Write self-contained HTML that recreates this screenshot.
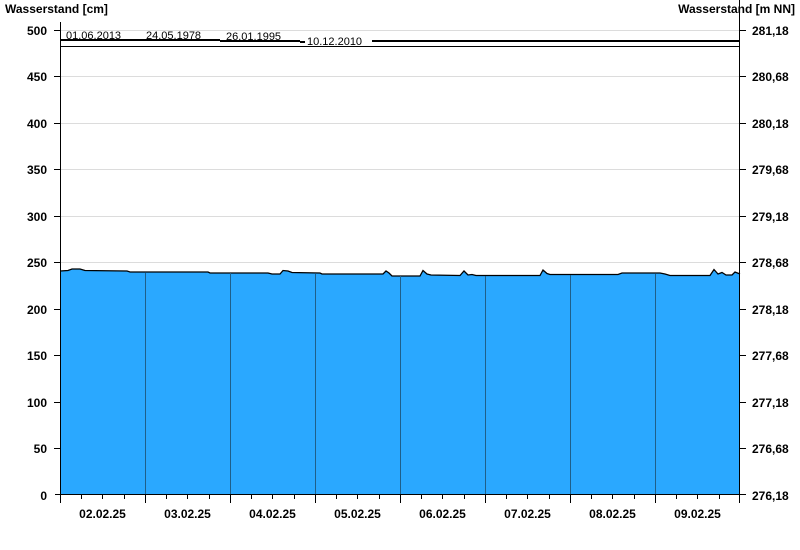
<!DOCTYPE html>
<html><head><style>
body{margin:0;background:#fff;}
svg{display:block;font-family:"Liberation Sans",Arial,sans-serif;}
.b{font-weight:bold;font-size:12px;fill:#000;}
.s{font-size:11px;fill:#000;}
</style></head><body>
<svg width="800" height="550" xmlns="http://www.w3.org/2000/svg">
<rect width="800" height="550" fill="#fff"/>
<g stroke="#dcdcdc" stroke-width="1">
<line x1="60" x2="740" y1="30.5" y2="30.5"/>
<line x1="60" x2="740" y1="76.5" y2="76.5"/>
<line x1="60" x2="740" y1="123.5" y2="123.5"/>
<line x1="60" x2="740" y1="169.5" y2="169.5"/>
<line x1="60" x2="740" y1="216.5" y2="216.5"/>
<line x1="60" x2="740" y1="262.5" y2="262.5"/>
</g>
<path d="M60,495 L60,271 L68,270.5 L72,269 L80,269 L85,270.5 L127,271 L130,272 L208,272 L210,273 L268,273 L272,274 L280,274 L283,270.5 L288,271 L292,272.5 L320,273 L322,274 L383,274 L386,271 L389,273 L392,276 L420,276 L423,270.5 L427,274 L431,275 L460,275.5 L464,271 L468,275 L472,274.5 L476,275.5 L540,275.5 L543,270 L547,273.5 L550,274.5 L618,274.5 L622,273 L660,273 L665,274 L670,275.5 L710,275.5 L714,269.5 L718,274 L722,272.5 L726,275 L732,275 L735,272 L740,274 L740,495 Z" fill="#2aa8ff" stroke="none"/>
<path d="M60,271 L68,270.5 L72,269 L80,269 L85,270.5 L127,271 L130,272 L208,272 L210,273 L268,273 L272,274 L280,274 L283,270.5 L288,271 L292,272.5 L320,273 L322,274 L383,274 L386,271 L389,273 L392,276 L420,276 L423,270.5 L427,274 L431,275 L460,275.5 L464,271 L468,275 L472,274.5 L476,275.5 L540,275.5 L543,270 L547,273.5 L550,274.5 L618,274.5 L622,273 L660,273 L665,274 L670,275.5 L710,275.5 L714,269.5 L718,274 L722,272.5 L726,275 L732,275 L735,272 L740,274" fill="none" stroke="#000" stroke-width="1.3"/>
<g stroke="#1e5f8a" stroke-width="1">
<line x1="145.5" x2="145.5" y1="273" y2="495"/>
<line x1="230.5" x2="230.5" y1="273" y2="495"/>
<line x1="315.5" x2="315.5" y1="274" y2="495"/>
<line x1="400.5" x2="400.5" y1="276" y2="495"/>
<line x1="485.5" x2="485.5" y1="276" y2="495"/>
<line x1="570.5" x2="570.5" y1="275" y2="495"/>
<line x1="655.5" x2="655.5" y1="274" y2="495"/>
</g>
<!-- top lines -->
<g stroke="#000">
<line x1="60" x2="220" y1="40" y2="40" stroke-width="2"/>
<line x1="220" x2="300" y1="41" y2="41" stroke-width="2"/>
<line x1="372" x2="740" y1="41" y2="41" stroke-width="2"/>
<line x1="300" x2="305" y1="42" y2="42" stroke-width="2"/>
<line x1="60" x2="740" y1="46.5" y2="46.5" stroke-width="1"/>
</g>
<text class="s" x="66" y="39">01.06.2013</text>
<text class="s" x="146" y="39">24.05.1978</text>
<text class="s" x="226" y="40">26.01.1995</text>
<text class="s" x="307" y="45">10.12.2010</text>
<!-- axes -->
<g stroke="#000" stroke-width="1">
<line x1="60.5" x2="60.5" y1="22" y2="495"/>
<line x1="739.5" x2="739.5" y1="0" y2="495"/>
<line x1="55" x2="745" y1="494.5" y2="494.5"/>
</g>
<g stroke="#000">
<path d="M54,30.5h6M54,76.5h6M54,123.5h6M54,169.5h6M54,216.5h6M54,262.5h6M54,309.5h6M54,355.5h6M54,402.5h6M54,448.5h6"/>
<path d="M740,30.5h6M740,76.5h6M740,123.5h6M740,169.5h6M740,216.5h6M740,262.5h6M740,309.5h6M740,355.5h6M740,402.5h6M740,448.5h6M740,494.5h6"/>
<path d="M60.5,495v8M145.5,495v8M230.5,495v8M315.5,495v8M400.5,495v8M485.5,495v8M570.5,495v8M655.5,495v8M739.5,495v8"/>
<path d="M81.5,495v4M102.5,495v4M124.5,495v4M166.5,495v4M187.5,495v4M209.5,495v4M251.5,495v4M272.5,495v4M294.5,495v4M336.5,495v4M357.5,495v4M379.5,495v4M421.5,495v4M442.5,495v4M464.5,495v4M506.5,495v4M527.5,495v4M549.5,495v4M591.5,495v4M612.5,495v4M634.5,495v4M676.5,495v4M697.5,495v4M719.5,495v4"/>
</g>
<text class="b" x="5" y="13">Wasserstand [cm]</text>
<text class="b" x="795" y="13" text-anchor="end">Wasserstand [m NN]</text>
<g class="b" text-anchor="end">
<text x="47" y="35">500</text><text x="47" y="81">450</text><text x="47" y="128">400</text><text x="47" y="174">350</text><text x="47" y="221">300</text><text x="47" y="267">250</text><text x="47" y="314">200</text><text x="47" y="360">150</text><text x="47" y="407">100</text><text x="47" y="453">50</text><text x="47" y="500">0</text>
</g>
<g class="b">
<text x="752" y="35">281,18</text><text x="752" y="81">280,68</text><text x="752" y="128">280,18</text><text x="752" y="174">279,68</text><text x="752" y="221">279,18</text><text x="752" y="267">278,68</text><text x="752" y="314">278,18</text><text x="752" y="360">277,68</text><text x="752" y="407">277,18</text><text x="752" y="453">276,68</text><text x="752" y="500">276,18</text>
</g>
<g class="b" text-anchor="middle">
<text x="102.5" y="518">02.02.25</text><text x="187.5" y="518">03.02.25</text><text x="272.5" y="518">04.02.25</text><text x="357.5" y="518">05.02.25</text><text x="442.5" y="518">06.02.25</text><text x="527.5" y="518">07.02.25</text><text x="612.5" y="518">08.02.25</text><text x="697.5" y="518">09.02.25</text>
</g>
</svg>
</body></html>
